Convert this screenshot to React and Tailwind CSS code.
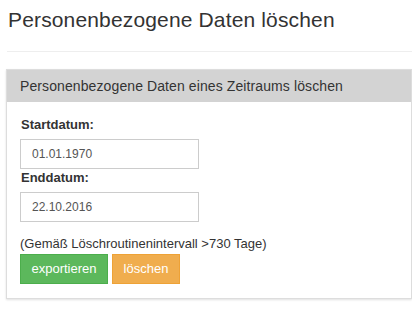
import React from 'react';

const DateField = ({ label, value }) => (
  <div>
    <label className="block pl-[1px] text-[13px] leading-[18px] font-bold">{label}</label>
    <input
      type="text"
      defaultValue={value}
      className="mt-[5px] block w-[179px] h-[30px] border border-[#ccc] bg-white pl-[11px] text-[12px] text-[#555] outline-none"
    />
  </div>
);

export default function App() {
  return (
    <div className="w-[412px] h-[310px] overflow-hidden bg-white text-[#333] font-['Liberation_Sans',Arial,sans-serif]">
      <h1 className="pl-[8px] pt-[9px] text-[21px] leading-[22px] tracking-[0.15px] font-normal">Personenbezogene Daten löschen</h1>
      <div className="ml-[7px] mt-[20px] border-t border-[#eee]" />

      <div className="ml-[6px] mt-[17px] w-[406px] border border-[#ddd] bg-white shadow-[0_1px_2px_rgba(0,0,0,0.12)]">
        <div className="flex h-[32px] items-center bg-[#d3d3d3] px-[13px] text-[14px] leading-[20px] tracking-[0.1px]">
          Personenbezogene Daten eines Zeitraums löschen
        </div>
        <div className="px-[13px] pt-[14px] pb-[14px]">
          <DateField label="Startdatum:" value="01.01.1970" />
          <DateField label="Enddatum:" value="22.10.2016" />
          <p className="mt-[13px] text-[13px] leading-[18px]">(Gemäß Löschroutinenintervall &gt;730 Tage)</p>
          <div className="mt-[1px] flex gap-[4px]">
            <button className="h-[30px] w-[88px] border border-[#4cae4c] bg-[#5cb85c] text-[13px] text-white">exportieren</button>
            <button className="h-[30px] w-[68px] border border-[#eea236] bg-[#f0ad4e] text-[13px] text-white">löschen</button>
          </div>
        </div>
      </div>
    </div>
  );
}
